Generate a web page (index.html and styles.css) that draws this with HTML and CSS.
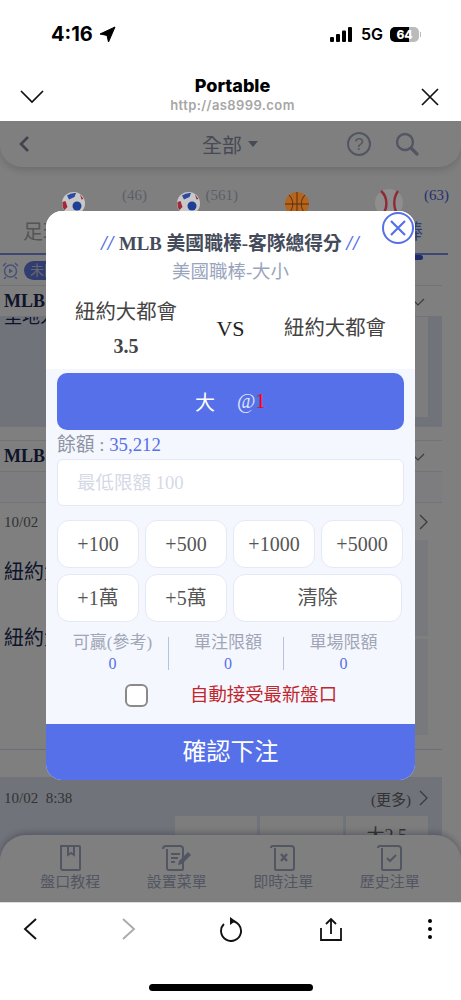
FILE: index.html
```html
<html lang="zh-Hant">
<head>
  <meta charset="UTF-8">
  <meta name="viewport" content="width=device-width, initial-scale=1.0">
  <title>Portable</title>
  <link rel="stylesheet" href="styles.css">
</head>
<body>
  <!-- Phone status bar -->
  <div class="status">
    <div class="status-left">
      <span class="clock">4:16</span>
      <svg width="17" height="17" viewBox="0 0 17 17"><path d="M16 1 1 8l7 1.4L9.500 16z" fill="#000" stroke="#000" stroke-linejoin="round"/></svg>
    </div>
    <div class="status-right">
      <svg width="23" height="15" viewBox="0 0 23 15"><rect x="0" y="10" width="4" height="5" rx="1"/><rect x="6" y="7" width="4" height="8" rx="1"/><rect x="12" y="3.500" width="4" height="11.500" rx="1"/><rect x="18" y="0" width="4" height="15" rx="1"/></svg>
      <span class="net">5G</span>
      <div class="battery"><span>64</span></div>
      <div class="battery-tip"></div>
    </div>
  </div>

  <!-- In-app browser title -->
  <div class="browser-bar">
    <svg width="26" height="16" viewBox="0 0 26 16"><path d="M2 2l11 11L24 2" fill="none" stroke="#111" stroke-width="1.700"/></svg>
    <div class="browser-title">
      <div class="browser-name">Portable</div>
      <div class="browser-url">http://as8999.com</div>
    </div>
    <svg width="20" height="20" viewBox="0 0 20 20"><path d="M2 2l16 16M18 2 2 18" fill="none" stroke="#111" stroke-width="1.700"/></svg>
  </div>

  <div class="web">
    <!-- Page behind the dialog -->
    <div class="top-nav">
      <svg width="12" height="18" viewBox="0 0 12 18"><path d="M10 2 3 9l7 7" fill="none" stroke="#7d8699" stroke-width="2.600"/></svg>
      <div class="top-title">全部<span class="caret"></span></div>
      <svg class="help" width="26" height="26" viewBox="0 0 26 26"><circle cx="13" cy="13" r="11" fill="none" stroke="#a3acc4" stroke-width="2"/><text x="13" y="19" text-anchor="middle" class="help-mark">?</text></svg>
      <svg width="24" height="24" viewBox="0 0 24 24"><circle cx="10" cy="10" r="8" fill="none" stroke="#a3acc4" stroke-width="2.400"/><path d="M16 16l6 6" stroke="#a3acc4" stroke-width="3.200" stroke-linecap="round"/></svg>
    </div>

    <div class="tab-icons">
      <div class="tab-ico tab-ico-a">
        <svg class="ball" width="23" height="23" viewBox="0 0 23 23"><circle cx="11.500" cy="11.500" r="11.500" fill="#c8c8c8"/><path d="M5 3.500Q9 .500 14 1l-1.500 4L7 7.500z" fill="#2d4aa0"/><path d="M.500 10l3-1 2 6-3 3Q0 15 .500 10zM18 2.500l3.500 4.500-2 .500z" fill="#a02a3a"/><circle cx="15" cy="14" r="4.500" fill="#1f3f96"/></svg>
        <span class="count">(46)</span>
      </div>
      <div class="tab-ico tab-ico-b">
        <svg class="ball" width="23" height="23" viewBox="0 0 23 23"><circle cx="11.500" cy="11.500" r="11.500" fill="#c8c8c8"/><path d="M5 3.500Q9 .500 14 1l-1.500 4L7 7.500z" fill="#2d4aa0"/><path d="M.500 10l3-1 2 6-3 3Q0 15 .500 10zM18 2.500l3.500 4.500-2 .500z" fill="#a02a3a"/><circle cx="15" cy="14" r="4.500" fill="#1f3f96"/></svg>
        <span class="count">(561)</span>
      </div>
      <div class="tab-ico tab-ico-c">
        <svg class="ball" width="24" height="24" viewBox="0 0 24 24"><circle cx="12" cy="12" r="12" fill="#b5651d"/><path d="M12 0v24M0 12h24M4 3c5 5 5 13 0 18M20 3c-5 5-5 13 0 18" fill="none" stroke="#5a2f0c"/></svg>
      </div>
      <div class="tab-ico tab-ico-d">
        <svg class="ball" width="28" height="28" viewBox="0 0 28 28"><circle cx="14" cy="14" r="14" fill="#8e8e8e"/><path d="M6 2c7 6 7 18 1 24M23 2c-5 7-5 17 0 24" fill="none" stroke="#8e2a35" stroke-width="2.400"/></svg>
        <span class="count count-on">(63)</span>
      </div>
    </div>
    <div class="tab-labels">
      <span class="tab-label">足球</span>
      <span class="tab-label tab-label-on">職棒</span>
    </div>

    <div class="filter-row">
      <svg width="17" height="17" viewBox="0 0 17 17"><circle cx="8.500" cy="9" r="6" fill="none" stroke="#8ea4ee" stroke-width="1.500"/><path d="M7 6.500v5l4-2.500z" fill="#8ea4ee"/><path d="M1 4l3-3M16 4l-3-3M4 15l-2 2M13 15l2 2" stroke="#8ea4ee" stroke-width="1.500"/></svg>
      <span class="pill">未開賽</span>
    </div>

    <div class="list">
      <div class="league">MLB<svg class="league-arrow" width="14" height="8" viewBox="0 0 14 8"><path d="M1 1l6 6 6-6" fill="none" stroke="#777" stroke-width="1.200"/></svg></div>
      <div class="panel">
        <div class="panel-text">里地人</div>
        <div class="panel-cell"></div>
      </div>
      <div class="spacer"></div>
      <div class="league">MLB<svg class="league-arrow" width="14" height="8" viewBox="0 0 14 8"><path d="M1 1l6 6 6-6" fill="none" stroke="#777" stroke-width="1.200"/></svg></div>
      <div class="league-sub"></div>
      <div class="match">
        <div class="match-date"><span>10/02</span><svg width="9" height="16" viewBox="0 0 9 16"><path d="M1 1l7 7-7 7" fill="none" stroke="#777" stroke-width="1.300"/></svg></div>
        <div class="match-body">
          <div class="match-teams">
            <div class="match-team">紐約大都會</div>
            <div class="match-team match-team-b">紐約大都會</div>
          </div>
          <div class="match-cells">
            <div class="match-cell"></div>
            <div class="match-cell"></div>
          </div>
        </div>
      </div>
      <div class="match-next">
        <div class="match-date"><span>10/02&nbsp; 8:38</span><span class="more">(更多)<svg width="9" height="16" viewBox="0 0 9 16"><path d="M1 1l7 7-7 7" fill="none" stroke="#777" stroke-width="1.300"/></svg></span></div>
        <div class="odds">
          <div class="odd"></div>
          <div class="odd"></div>
          <div class="odd">大2.5</div>
        </div>
      </div>
    </div>

    <!-- Bottom menu of the page -->
    <div class="bottom-nav">
      <div class="bottom-item">
        <svg width="24" height="26" viewBox="0 0 24 26"><path d="M3 1h18a1 1 0 0 1 1 1v22a1 1 0 0 1-1 1H5a2 2 0 0 1-2-2z" fill="none" stroke="#a3acc4" stroke-width="2"/><path d="M10 1v9l3-2 3 2V1" fill="none" stroke="#a3acc4" stroke-width="2"/></svg>
        <span>盤口教程</span>
      </div>
      <div class="bottom-item">
        <svg width="30" height="26" viewBox="0 0 30 26"><path d="M1 4a3 3 0 0 1 3-3h14a3 3 0 0 1 3 3v20a1 1 0 0 1-1 1H7a2 2 0 0 1-2-2V4" fill="none" stroke="#a3acc4" stroke-width="2"/><path d="M9 9h9M9 13h7M9 17h4" stroke="#a3acc4" stroke-width="2"/><path d="M16 20l1-4 9-9 3 3-9 9z" fill="#a3acc4"/></svg>
        <span>設置菜單</span>
      </div>
      <div class="bottom-item">
        <svg width="26" height="26" viewBox="0 0 26 26"><path d="M1 3a2 2 0 0 1 2-2h18a3 3 0 0 1 3 3v19a2 2 0 0 1-2 2H6a1 1 0 0 1-1-1V3" fill="none" stroke="#a3acc4" stroke-width="2"/><path d="M11 9l6 7M17 9l-6 7" stroke="#a3acc4" stroke-width="2.400"/></svg>
        <span>即時注單</span>
      </div>
      <div class="bottom-item">
        <svg width="26" height="26" viewBox="0 0 26 26"><path d="M1 3a2 2 0 0 1 2-2h18a3 3 0 0 1 3 3v19a2 2 0 0 1-2 2H6a1 1 0 0 1-1-1V3" fill="none" stroke="#a3acc4" stroke-width="2"/><path d="M10 13l3 3 6-6" fill="none" stroke="#a3acc4" stroke-width="2"/></svg>
        <span>歷史注單</span>
      </div>
    </div>

    <div class="dim"></div>

    <!-- Bet dialog -->
    <div class="modal">
      <div class="close-btn">
        <svg width="20" height="20" viewBox="0 0 20 20"><path d="M3 3l14 14M17 3 3 17" stroke="#5570e8" stroke-width="2.200"/></svg>
      </div>
      <div class="modal-head">
        <div class="modal-title"><span class="slashes">//</span> MLB 美國職棒-客隊總得分 <span class="slashes">//</span></div>
        <div class="modal-sub">美國職棒-大小</div>
        <div class="teams">
          <div class="team">
            <div class="team-name">紐約大都會</div>
            <div class="team-line">3.5</div>
          </div>
          <div class="versus">VS</div>
          <div class="team team-away">
            <div class="team-name">紐約大都會</div>
          </div>
        </div>
      </div>
      <div class="modal-body">
        <div class="pick">大<span class="pick-at">@<span class="pick-odds">1</span></span></div>
        <div class="balance">餘額 : <span class="balance-num">35,212</span></div>
        <div class="amount">最低限額 100</div>
        <div class="chips">
          <div class="chip">+100</div>
          <div class="chip">+500</div>
          <div class="chip">+1000</div>
          <div class="chip">+5000</div>
          <div class="chip">+1萬</div>
          <div class="chip">+5萬</div>
          <div class="chip chip-wide">清除</div>
        </div>
        <div class="limits">
          <div class="limit"><div>可贏(參考)</div><div class="limit-num">0</div></div>
          <div class="limit"><div>單注限額</div><div class="limit-num">0</div></div>
          <div class="limit"><div>單場限額</div><div class="limit-num">0</div></div>
        </div>
        <div class="auto">
          <span class="check"></span>
          <span class="auto-text">自動接受最新盤口</span>
        </div>
      </div>
      <div class="confirm">確認下注</div>
    </div>
  </div>

  <!-- Browser toolbar -->
  <div class="toolbar">
    <div class="tool-row">
      <svg width="16" height="24" viewBox="0 0 16 24"><path d="M14 2 3 12l11 10" fill="none" stroke="#111" stroke-width="1.900"/></svg>
      <svg width="16" height="24" viewBox="0 0 16 24"><path d="M2 2l11 10L2 22" fill="none" stroke="#aaa" stroke-width="1.900"/></svg>
      <svg width="24" height="26" viewBox="0 0 24 26"><path d="M12 5A10 10 0 1 1 4.900 8" fill="none" stroke="#111" stroke-width="1.900"/><path d="M11 1l5.500 4-5.500 4z" fill="#111"/></svg>
      <svg width="22" height="24" viewBox="0 0 22 24"><path d="M1 11v12h20V11M11 17V2M6 7l5-5 5 5" fill="none" stroke="#111" stroke-width="1.800"/></svg>
      <svg width="6" height="22" viewBox="0 0 6 22"><circle cx="3" cy="3" r="2"/><circle cx="3" cy="11" r="2"/><circle cx="3" cy="19" r="2"/></svg>
    </div>
    <div class="home-bar"></div>
  </div>
</body>
</html>
```

FILE: styles.css
```css
* {
  box-sizing: border-box;
}

html, body {
  margin: 0;
  width: 461px;
  height: 1000px;
  overflow: hidden;
  background: #fff;
  font-family: "Liberation Serif", "Noto Sans CJK TC", serif;
}

/* Status bar */
.status {
  height: 70px;
  padding: 0 40px 2px 51px;
  display: flex;
  justify-content: space-between;
  align-items: center;
  font-family: Inter, sans-serif;
}

.status-left, .status-right {
  display: flex;
  align-items: center;
}

.status-left {
  gap: 6px;
}

.clock {
  font-size: 20px;
  font-weight: 700;
}

.net {
  margin: 0 7px 0 8px;
  font-size: 16px;
  font-weight: 600;
}

.battery {
  width: 29px;
  height: 15px;
  border-radius: 5px;
  background: linear-gradient(90deg, #000 64%, #bbb 64%);
  color: #fff;
  font-size: 12px;
  font-weight: 800;
  line-height: 15px;
  text-align: center;
}

.battery-tip {
  width: 1px;
  height: 5px;
  margin-left: 1px;
  background: #bbb;
}

/* Browser title */
.browser-bar {
  height: 51px;
  padding: 0 21px 0 19px;
  display: flex;
  justify-content: space-between;
  align-items: center;
}

.browser-bar svg {
  margin-top: 2px;
}

.browser-title {
  margin-top: -3px;
  text-align: center;
  font-family: Inter, sans-serif;
}

.browser-name {
  font-size: 18px;
  font-weight: 800;
  line-height: 22px;
}

.browser-url {
  color: #a6a6a6;
  font-size: 13px;
  font-weight: 600;
  letter-spacing: 0.4px;
  line-height: 16px;
}

/* Page behind the dialog */
.web {
  position: relative;
  height: 781px;
  overflow: hidden;
  background: #fff;
  color: #1c2a55;
}

.top-nav {
  height: 46px;
  padding: 0 42px 0 18px;
  display: flex;
  align-items: center;
  border-radius: 0 0 22px 22px;
  background: #fff;
  box-shadow: 0 3px 8px rgba(0, 0, 0, 0.16);
}

.top-title {
  margin-left: 172px;
  color: #8a94aa;
  font-size: 20px;
  display: flex;
  align-items: center;
}

.caret {
  margin-left: 6px;
  border: 5px solid transparent;
  border-top: 6px solid #8a94aa;
  border-bottom: 0;
}

.help {
  margin-left: 88px;
  margin-right: 23px;
}

.help-mark {
  font-family: "Liberation Sans", sans-serif;
  font-size: 17px;
  fill: #a3acc4;
}

.tab-icons {
  height: 52px;
  padding-top: 25px;
  display: flex;
  align-items: flex-start;
}

.tab-ico {
  flex: none;
  display: flex;
  justify-content: space-between;
}

/* the sport balls stay bright above the dim layer */
.ball {
  position: relative;
  z-index: 1;
}

.tab-ico-a {
  width: 147px;
  padding-left: 62px;
}

.tab-ico-b {
  width: 91px;
  padding-left: 30px;
}

.tab-ico-c {
  width: 71px;
  padding-left: 47px;
}

.tab-ico-d {
  width: 140px;
  margin-top: -3px;
  padding-left: 66px;
}

.count {
  margin-top: -5px;
  color: #b5bed6;
  font-size: 15px;
}

.count-on {
  margin-top: -2px;
  color: #4a60e0;
}

.tab-labels {
  width: 448px;
  height: 36px;
  padding: 0 25px 0 23px;
  display: flex;
  justify-content: space-between;
  border-bottom: 2px solid #7b90e4;
  font-size: 20px;
  line-height: 26px;
  color: #aaa;
}

.tab-label-on {
  position: relative;
  color: #6279e0;
}

.tab-label-on::after {
  content: "";
  position: absolute;
  right: 0;
  bottom: -7px;
  width: 20px;
  height: 5px;
  border-radius: 3px;
  background: #3a55d8;
}

.filter-row {
  height: 30px;
  padding: 0 0 0 2px;
  display: flex;
  align-items: center;
  gap: 5px;
}

.pill {
  height: 19px;
  padding: 0 6px;
  border-radius: 10px;
  background: #6279e0;
  color: #ccd;
  font-size: 14px;
  line-height: 19px;
}

.list {
  width: 442px;
}

.league {
  height: 32px;
  padding: 1px 17px 0 4px;
  display: flex;
  justify-content: space-between;
  align-items: center;
  border-top: 1px solid #e2e6f5;
  border-bottom: 1px solid #e2e6f5;
  color: #1c2a55;
  font-size: 18px;
  font-weight: 700;
}

.panel {
  height: 110px;
  padding-right: 14px;
  display: flex;
  justify-content: space-between;
  overflow: hidden;
  background: #e2e6f6;
}

.panel-text {
  height: 20px;
  margin-top: -10px;
  padding-left: 4px;
  font-size: 18px;
  line-height: 20px;
  color: #1c2a55;
}

.panel-cell {
  width: 253px;
  height: 100px;
  background: #fafafa;
}

.spacer {
  height: 13px;
}

.league-sub {
  height: 31px;
  border-bottom: 1px solid #e2e6f5;
  background: #fafaff;
}

.match {
  height: 247px;
  padding: 7px 14px 0 4px;
  border-bottom: 1px solid #d8dcef;
}

.match-date {
  height: 24px;
  display: flex;
  justify-content: space-between;
  align-items: center;
  color: #666;
  font-size: 15px;
}

.more {
  display: flex;
  align-items: center;
  gap: 8px;
}

.match-body {
  margin-top: 6px;
  display: flex;
  justify-content: space-between;
}

.match-team {
  margin-top: 18px;
  font-size: 20px;
  line-height: 28px;
}

.match-team-b {
  margin-top: 38px;
}

.match-cells {
  width: 253px;
  display: flex;
  flex-direction: column;
  gap: 3px;
}

.match-cell {
  height: 96px;
  background: #f0f2f8;
}

.match-next {
  margin-top: 27px;
  padding: 9px 14px 0 4px;
  background: #e2e6f6;
}

.odds {
  margin-top: 6px;
  padding-left: 171px;
  display: flex;
  gap: 3px;
}

.odd {
  flex: 1;
  height: 40px;
  padding-top: 10px;
  background: #fafafa;
  color: #666;
  font-size: 18px;
  line-height: 20px;
  text-align: center;
}

.bottom-nav {
  position: absolute;
  left: 0;
  right: 0;
  bottom: 0;
  height: 67px;
  padding: 10px 0 0 17px;
  display: flex;
  border-radius: 26px 26px 0 0;
  background: #fff;
  box-shadow: 0 -2px 6px rgba(30, 40, 90, 0.3);
}

.bottom-item {
  width: 106.500px;
  display: flex;
  flex-direction: column;
  align-items: center;
  gap: 1px;
  color: #a3acc4;
  font-size: 15px;
  line-height: 20px;
}

.dim {
  position: absolute;
  inset: 0;
  background: rgba(0, 0, 0, 0.5);
}

/* Bet dialog */
.modal {
  position: absolute;
  z-index: 2;
  left: 46px;
  top: 90px;
  width: 369px;
  height: 569px;
  display: flex;
  flex-direction: column;
  border-radius: 16px;
  background: #f5f7ff;
}

.close-btn {
  position: absolute;
  right: 1px;
  top: 1px;
  width: 32px;
  height: 32px;
  display: flex;
  justify-content: center;
  align-items: center;
  border: 2px solid #5570e8;
  border-radius: 50%;
  background: #fff;
}

.modal-head {
  height: 158px;
  padding-top: 20px;
  border-radius: 16px 16px 0 0;
  background: #fff;
  text-align: center;
}

.modal-title {
  color: #444b5a;
  font-size: 18.800px;
  font-weight: 700;
  line-height: 24px;
}

.slashes {
  color: #5570e8;
  font-size: 20px;
  font-style: italic;
  letter-spacing: 1px;
}

.modal-sub {
  margin-top: 4px;
  color: #9aa5bd;
  font-size: 18.500px;
  line-height: 24px;
}

.teams {
  margin-top: 11px;
  padding: 0 29px;
  display: flex;
  justify-content: space-between;
  align-items: center;
}

.team {
  width: 102px;
}

.team-away {
  align-self: center;
  padding-bottom: 3px;
}

.team-name {
  color: #444;
  font-size: 20.400px;
  line-height: 34px;
}

.team-line {
  color: #444;
  font-size: 20px;
  font-weight: 700;
  line-height: 34px;
}

.versus {
  color: #222;
  font-size: 22px;
}

.modal-body {
  flex: 1;
  padding: 4px 11px 0;
}

.pick {
  height: 57px;
  padding-left: 138px;
  display: flex;
  align-items: center;
  border-radius: 10px;
  background: #5570e8;
  color: #fff;
  font-size: 20px;
}

.pick-at {
  margin-left: 22px;
  color: #dfe4ff;
}

.pick-odds {
  color: #f00;
}

.balance {
  height: 29px;
  color: #8d93a3;
  font-size: 18.800px;
  line-height: 30px;
}

.balance-num {
  color: #5570e8;
}

.amount {
  height: 47px;
  padding-left: 19px;
  border: 1px solid #e4e8f8;
  border-radius: 6px;
  background: #fff;
  color: #d5d9e6;
  font-size: 18.500px;
  line-height: 46px;
}

.chips {
  margin-top: 14px;
  display: grid;
  grid-template-columns: repeat(4, 82px);
  gap: 6px;
}

.chip {
  height: 48px;
  border: 1px solid #e4e8f8;
  border-radius: 12px;
  background: #fff;
  color: #555;
  font-size: 20px;
  line-height: 46px;
  text-align: center;
}

.chip-wide {
  grid-column: span 2;
  width: 169px;
}

.limits {
  margin-top: 10px;
  margin-left: -1px;
  display: grid;
  grid-template-columns: 113px 115px 119px;
}

.limit {
  color: #a0a6b5;
  font-size: 17px;
  line-height: 21px;
  text-align: center;
  background: linear-gradient(#b9c2dd, #b9c2dd) right 5px / 1px 33px no-repeat;
}

.limit:nth-child(2) {
  padding-left: 3px;
}

.limit:last-child {
  background: none;
}

.limit-num {
  color: #5570e8;
  font-size: 16px;
}

.auto {
  margin-top: 8px;
  padding-left: 68px;
  display: flex;
  align-items: center;
}

.check {
  width: 23px;
  height: 23px;
  border: 2px solid #8a8a8a;
  border-radius: 6px;
  background: #fff;
}

.auto-text {
  margin-left: 42px;
  color: #c0272d;
  font-size: 18.400px;
  line-height: 26px;
}

.confirm {
  height: 56px;
  border-radius: 0 0 16px 16px;
  background: #5570e8;
  color: #fff;
  font-size: 24px;
  line-height: 56px;
  text-align: center;
}

/* Browser toolbar */
.toolbar {
  height: 98px;
  border-top: 1px solid #ddd;
}

.tool-row {
  height: 52px;
  display: grid;
  grid-template-columns: 60px 138px 66px 134px 63px;
  justify-items: center;
  align-items: center;
}

.home-bar {
  width: 164px;
  height: 7px;
  margin: 29px auto 0;
  border-radius: 4px;
  background: #000;
}
```
